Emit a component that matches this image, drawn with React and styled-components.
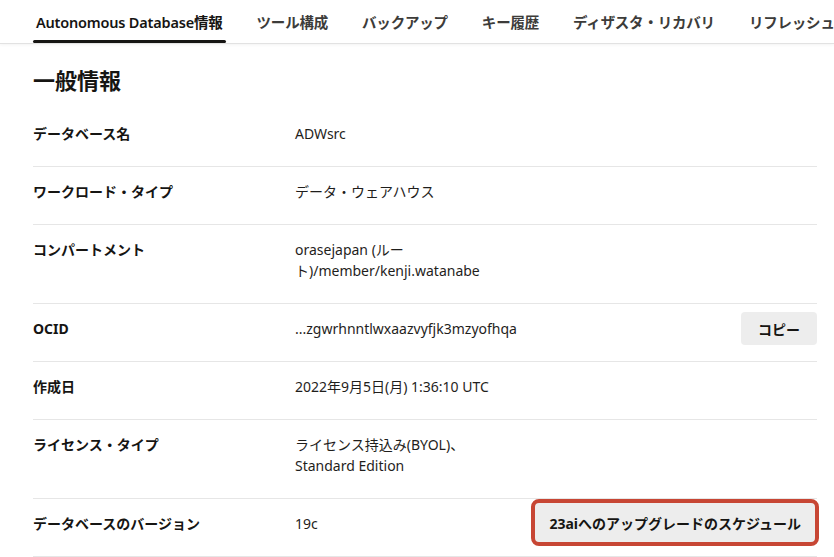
import React from 'react';
import styled, { createGlobalStyle } from 'styled-components';

const GlobalStyle = createGlobalStyle`
    body {
        margin: 0;
        background: #ffffff;
        color: #161513;
        font-family: "Noto Sans", "Noto Sans CJK JP", sans-serif;
    }
`;

const Page = styled.div`
    width: 834px;
    height: 557px;
    overflow: hidden;
    background: #ffffff;
`;

const TabBar = styled.nav`
    display: flex;
    gap: 28px;
    height: 43px;
    padding-left: 33px;
    border-bottom: 1px solid #e2e2e2;
    box-shadow: 0 1px 3px rgba(0, 0, 0, 0.05);
    white-space: nowrap;
    overflow: hidden;
`;

const Tab = styled.div`
    position: relative;
    display: flex;
    align-items: center;
    padding: 0 3px;
    font-size: 14.5px;
    font-weight: 600;
    letter-spacing: -0.2px;
    color: ${p => (p.$active ? '#161513' : '#3d3c3a')};

    &::after {
        content: '';
        display: ${p => (p.$active ? 'block' : 'none')};
        position: absolute;
        left: 0;
        right: 0;
        bottom: 0;
        height: 3px;
        border-radius: 2px;
        background: #161513;
    }
`;

const Content = styled.main`
    padding: 0 17px 0 33px;
`;

const Heading = styled.h2`
    margin: 22px 0 15px;
    font-size: 22px;
    line-height: 28px;
    font-weight: 700;
`;

const Row = styled.div`
    display: grid;
    grid-template-columns: 262px 200px minmax(0, 1fr);
    align-items: start;
    padding: 14px 0 22px;
    border-bottom: 1px solid #e6e6e6;
    font-size: 14px;
    line-height: 21px;
`;

const Label = styled.div`
    font-weight: 700;
`;

const Value = styled.div`
    font-size: 14px;
    color: #1f1e1c;
`;

const Action = styled.div`
    display: flex;
    justify-content: flex-end;
`;

const Button = styled.button`
    height: ${p => (p.$highlight ? '47px' : '33px')};
    margin: ${p => (p.$highlight ? '-14px -2px -12px 0' : '-6px 0 -6px 0')};
    padding: ${p => (p.$highlight ? '0 14px' : '0 17px')};
    border: ${p => (p.$highlight ? '4px solid #c74634' : 'none')};
    border-radius: ${p => (p.$highlight ? '8px' : '4px')};
    background: #ededed;
    color: #161513;
    font-family: inherit;
    font-size: 14px;
    font-weight: 700;
    white-space: nowrap;
`;

const tabs = [
    'Autonomous Database情報',
    'ツール構成',
    'バックアップ',
    'キー履歴',
    'ディザスタ・リカバリ',
    'リフレッシュ可能クローン',
];

const details = [
    { label: 'データベース名', value: 'ADWsrc' },
    { label: 'ワークロード・タイプ', value: 'データ・ウェアハウス' },
    { label: 'コンパートメント', value: 'orasejapan (ルート)/member/kenji.watanabe' },
    { label: 'OCID', value: '...zgwrhnntlwxaazvyfjk3mzyofhqa', action: 'コピー' },
    { label: '作成日', value: '2022年9月5日(月) 1:36:10 UTC' },
    { label: 'ライセンス・タイプ', value: 'ライセンス持込み(BYOL)、Standard Edition' },
    { label: 'データベースのバージョン', value: '19c', action: '23aiへのアップグレードのスケジュール', highlight: true },
];

const App = () => {
    return (
        <>
            <GlobalStyle />
            <Page>
                <TabBar>
                    {tabs.map((t, i) => (
                        <Tab key={t} $active={i === 0}>{t}</Tab>
                    ))}
                </TabBar>
                <Content>
                    <Heading>一般情報</Heading>
                    {details.map(d => (
                        <Row key={d.label}>
                            <Label>{d.label}</Label>
                            <Value>{d.value}</Value>
                            <Action>
                                {d.action && <Button $highlight={d.highlight}>{d.action}</Button>}
                            </Action>
                        </Row>
                    ))}
                </Content>
            </Page>
        </>
    );
};

export default App;
